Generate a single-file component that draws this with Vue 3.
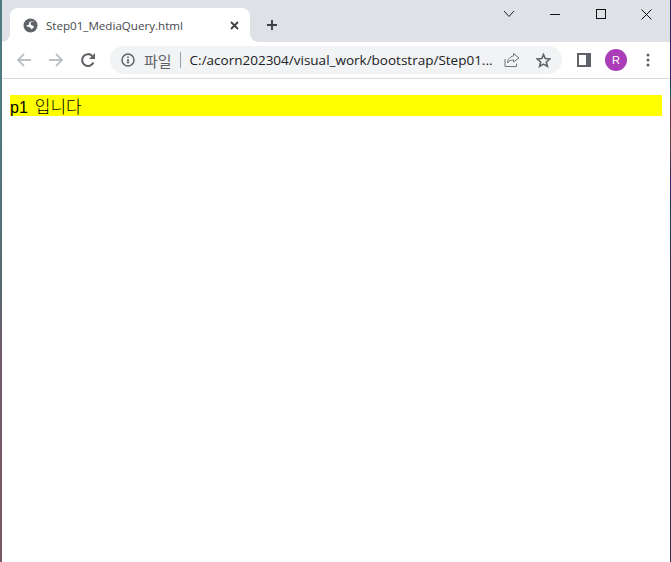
<script setup>
</script>

<template>
  <div class="window">
    <div class="edge edge-left"></div>
    <div class="main">
      <div class="tabstrip">
        <div class="tab">
          <svg class="globe" width="15" height="15" viewBox="0 0 15 15">
            <circle cx="7.5" cy="7.5" r="7" fill="#5f6368" />
            <path d="M11.6 3.4 C9 3 7.2 4.6 7.6 6.2 C8 7.8 10.6 7.2 10.9 8.6 C11.1 9.8 9.6 10.4 8.6 11.4 C8.2 10 6.8 9.2 5.2 8.8 C4.6 8.6 4 8.2 3.4 8.4 C3.8 6.8 5 6.6 5.6 7.4 C5.8 6.2 6 4.8 7 3.8 C8.4 3 10.2 3 11.6 3.4 Z" fill="#fff" />
          </svg>
          <span class="tab-title">Step01_MediaQuery.html</span>
          <svg class="tab-close" width="9" height="9" viewBox="0 0 9 9">
            <path d="M1 1 L8 8 M8 1 L1 8" stroke="#3c4043" stroke-width="1.8" fill="none" />
          </svg>
        </div>
        <svg class="new-tab" width="12" height="12" viewBox="0 0 12 12">
          <path d="M6 1 V11 M1 6 H11" stroke="#3c4043" stroke-width="1.9" fill="none" />
        </svg>
        <div class="controls">
          <svg class="ctl ctl-chevron" width="12" height="8" viewBox="0 0 12 8">
            <path d="M1 1 L6 6.5 L11 1" stroke="#222" stroke-width="1" fill="none" />
          </svg>
          <svg class="ctl ctl-min" width="10" height="10" viewBox="0 0 10 10">
            <path d="M0 5.5 H10" stroke="#111" stroke-width="1" fill="none" />
          </svg>
          <svg class="ctl ctl-max" width="10" height="10" viewBox="0 0 10 10">
            <rect x="0.5" y="0.5" width="9" height="9" stroke="#111" stroke-width="1" fill="none" />
          </svg>
          <svg class="ctl ctl-close" width="11" height="11" viewBox="0 0 11 11">
            <path d="M0.5 0.5 L10.5 10.5 M10.5 0.5 L0.5 10.5" stroke="#111" stroke-width="1" fill="none" />
          </svg>
        </div>
      </div>
      <div class="toolbar">
        <svg class="nav nav-back" width="16" height="16" viewBox="0 0 16 16">
          <path d="M15 8 H2 M8 2 L2 8 L8 14" stroke="#bdc1c6" stroke-width="1.8" fill="none" />
        </svg>
        <svg class="nav nav-forward" width="16" height="16" viewBox="0 0 16 16">
          <path d="M1 8 H14 M8 2 L14 8 L8 14" stroke="#bdc1c6" stroke-width="1.8" fill="none" />
        </svg>
        <svg class="nav nav-reload" width="16" height="16" viewBox="0 0 16 16">
          <path d="M13.4 10.5 A5.9 5.9 0 1 1 12.2 3.9" stroke="#5f6368" stroke-width="2.1" fill="none" />
          <path d="M9 7 H15 V1 Z" fill="#5f6368" />
        </svg>
        <div class="omnibox">
          <svg class="info" width="14" height="14" viewBox="0 0 14 14">
            <circle cx="7" cy="7" r="6" stroke="#5f6368" stroke-width="1.5" fill="none" />
            <path d="M7 6 V10.5 M7 3.4 V5" stroke="#5f6368" stroke-width="1.6" fill="none" />
          </svg>
          <span class="scheme">파일</span>
          <span class="sep"></span>
          <span class="url">C:/acorn202304/visual_work/bootstrap/Step01...</span>
          <svg class="share" width="16" height="16" viewBox="0 0 16 16">
            <path d="M1 7 V14.5 H12.5 V11.5" stroke="#6f7377" stroke-width="1" fill="none" />
            <path d="M9.5 1.5 L15 6 L9.5 10 V8 C6.5 8 4.5 9 3.5 11 C3.5 7.5 6 4.5 9.5 4 Z" stroke="#6f7377" stroke-width="1" fill="none" />
          </svg>
          <svg class="star" width="15" height="15" viewBox="0 0 15 15">
            <path d="M7.5 1.5 L9.2 5.6 L13.8 6 L10.3 9 L11.4 13.4 L7.5 11.1 L3.6 13.4 L4.7 9 L1.2 6 L5.8 5.6 Z" stroke="#5f6368" stroke-width="1.6" fill="none" />
          </svg>
        </div>
        <svg class="panel" width="14" height="14" viewBox="0 0 14 14">
          <rect x="0" y="0" width="14" height="14" fill="#5f6368" />
          <rect x="2" y="2" width="7" height="10" fill="#fff" />
        </svg>
        <div class="avatar">R</div>
        <svg class="kebab" width="4" height="14" viewBox="0 0 4 14">
          <circle cx="2" cy="2" r="1.5" fill="#5f6368" />
          <circle cx="2" cy="7" r="1.5" fill="#5f6368" />
          <circle cx="2" cy="12" r="1.5" fill="#5f6368" />
        </svg>
      </div>
      <div class="page">
        <p class="p1">p1 <span class="ko">입니다</span></p>
      </div>
    </div>
    <div class="edge edge-right"></div>
  </div>
</template>

<style>
html, body { margin: 0; background: #fff; }
</style>

<style scoped>
.window {
  display: flex;
  width: 671px;
  height: 562px;
  overflow: hidden;
  font-family: "Liberation Sans", "Noto Sans CJK KR", sans-serif;
}
.edge { flex: none; }
.edge-left {
  width: 2px;
  background: linear-gradient(180deg, #4f7a80 0, #4f7a80 107px, #566a72 285px, #75596a 357px, #7a5a68 562px);
}
.edge-right {
  width: 1px;
  background: linear-gradient(180deg, #2b2560 0, #2b2a66 78px, #1f5a5a 95px, #6b2a40 107px, #5a4848 143px, #2a2a68 180px, #26405c 220px, #332a5c 300px, #332a5c 562px);
}
.main { flex: 1; display: flex; flex-direction: column; min-width: 0; }
.tabstrip {
  height: 42px;
  flex: none;
  display: flex;
  align-items: flex-end;
  background: #dee1e6;
  padding-left: 8px;
}
.tab {
  position: relative;
  width: 240px;
  height: 34px;
  background: #fff;
  border-radius: 8px 8px 0 0;
  display: flex;
  align-items: center;
  padding-left: 13px;
  box-sizing: border-box;
  flex: none;
}
.tab::before,
.tab::after {
  content: "";
  position: absolute;
  bottom: 0;
  width: 8px;
  height: 8px;
}
.tab::before {
  left: -8px;
  background: radial-gradient(circle at 0 0, transparent 7.5px, #fff 8px);
}
.tab::after {
  right: -8px;
  background: radial-gradient(circle at 100% 0, transparent 7.5px, #fff 8px);
}
.globe { flex: none; }
.tab-title {
  margin-left: 8px;
  font-family: "Open Sans", sans-serif;
  font-size: 11.6px;
  color: #45494d;
  white-space: nowrap;
}
.tab-close { margin-left: auto; margin-right: 11px; flex: none; }
.new-tab { margin-left: 16px; margin-bottom: 11px; flex: none; }
.controls {
  margin-left: auto;
  align-self: flex-start;
  display: flex;
  align-items: center;
  height: 28px;
  padding-right: 18px;
}
.ctl { flex: none; display: block; }
.ctl-min { margin-left: 35px; }
.ctl-max { margin-left: 36px; }
.ctl-close { margin-left: 35px; }
.toolbar {
  height: 36px;
  flex: none;
  box-sizing: content-box;
  display: flex;
  align-items: center;
  background: #fff;
  border-bottom: 1px solid #d8dadd;
  padding-left: 14px;
}
.nav { flex: none; }
.nav-forward { margin-left: 16px; }
.nav-reload { margin-left: 16px; }
.omnibox {
  margin-left: 14px;
  width: 452px;
  height: 28px;
  border-radius: 14px;
  background: #f1f3f4;
  display: flex;
  align-items: center;
  padding-left: 11px;
  padding-right: 11px;
  box-sizing: border-box;
  flex: none;
}
.info { flex: none; }
.scheme { margin-left: 9px; font-size: 15px; color: #5f6368; white-space: nowrap; }
.sep { width: 1px; height: 16px; background: #9aa0a6; margin-left: 8px; flex: none; }
.url {
  margin-left: 9px;
  font-family: "Open Sans", sans-serif;
  font-size: 13.5px;
  color: #202124;
  white-space: nowrap;
  flex: none;
}
.share { margin-left: auto; flex: none; }
.star { margin-left: 16px; flex: none; }
.panel { margin-left: 15px; flex: none; }
.avatar {
  margin-left: 14px;
  width: 22px;
  height: 22px;
  border-radius: 50%;
  background: #a93eb8;
  color: #fff;
  font-size: 11px;
  display: flex;
  align-items: center;
  justify-content: center;
  flex: none;
}
.kebab { margin-left: 19px; flex: none; }
.page { flex: 1; background: #fff; padding: 16px 8px; }
.p1 {
  margin: 0;
  background: #ff0;
  height: 21px;
  font-family: "Liberation Sans", "Noto Sans CJK KR", sans-serif;
  font-size: 16px;
  line-height: 21px;
  color: #000;
  word-spacing: 2.5px;
}
.ko {
  font-family: "Noto Sans CJK KR", sans-serif;
  font-size: 17px;
  font-weight: 300;
}
</style>
